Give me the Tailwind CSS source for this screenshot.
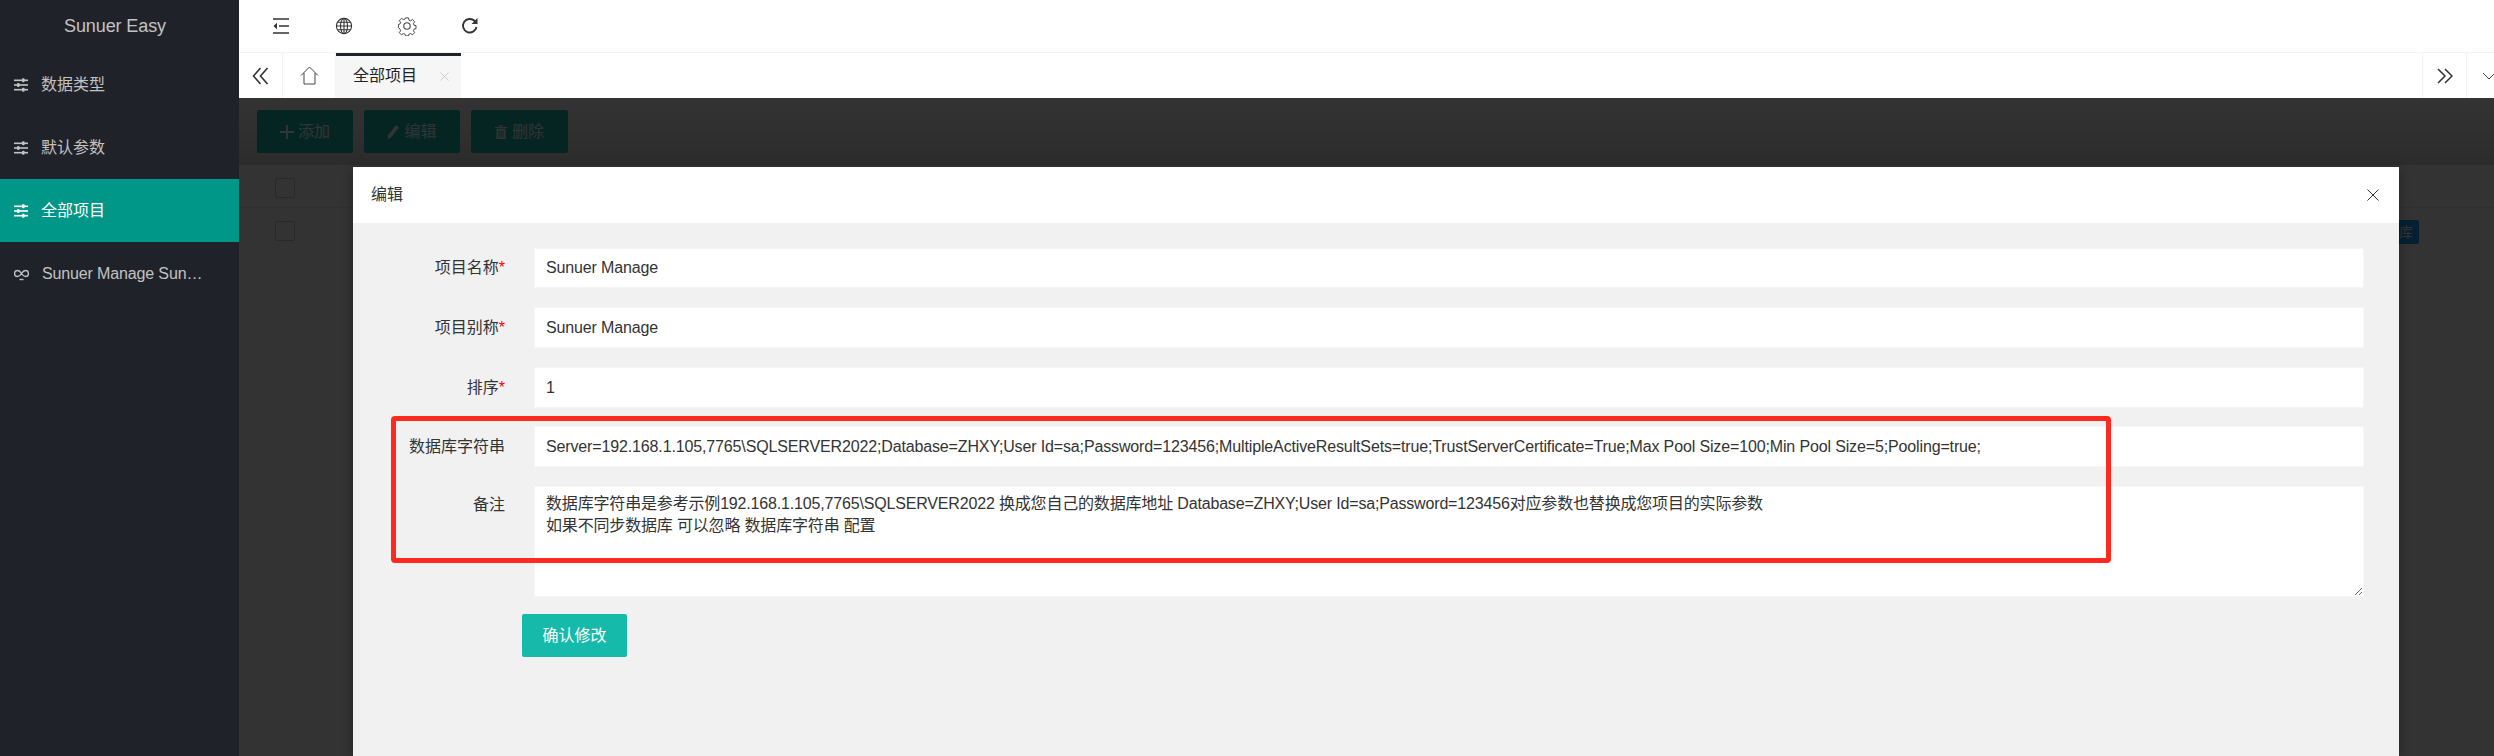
<!doctype html>
<html lang="zh-CN">
<head>
<meta charset="utf-8">
<title>Sunuer Easy</title>
<script src="https://cdn.jsdelivr.net/npm/@tailwindcss/browser@4"></script>
</head>
<body class="m-0 h-[756px] w-[2494px] overflow-hidden bg-white font-['Liberation_Sans','Noto_Sans_CJK_SC',sans-serif] text-[16px] text-[#333]">
<div class="flex h-[756px] w-[2494px]">
  <aside class="w-[239px] shrink-0 bg-[#20222a] text-[#c2c2c3]">
    <div class="flex h-[53px] items-center justify-center pr-[9px] text-[18px] tracking-[-0.1px]">Sunuer Easy</div>
    <nav class="flex flex-col">
      <a class="flex h-[63px] items-center gap-[13px] pl-[14px]"><svg class="h-[14px] w-[14px]" viewBox="0 0 14 14" fill="currentColor"><rect y="1.5" width="14" height="1.6"/><rect y="6.2" width="14" height="1.6"/><rect y="10.9" width="14" height="1.6"/><rect x="8" y="0.3" width="2.6" height="4" rx="1"/><rect x="3" y="5" width="2.6" height="4" rx="1"/><rect x="8" y="9.7" width="2.6" height="4" rx="1"/></svg><span>数据类型</span></a>
      <a class="flex h-[63px] items-center gap-[13px] pl-[14px]"><svg class="h-[14px] w-[14px]" viewBox="0 0 14 14" fill="currentColor"><rect y="1.5" width="14" height="1.6"/><rect y="6.2" width="14" height="1.6"/><rect y="10.9" width="14" height="1.6"/><rect x="8" y="0.3" width="2.6" height="4" rx="1"/><rect x="3" y="5" width="2.6" height="4" rx="1"/><rect x="8" y="9.7" width="2.6" height="4" rx="1"/></svg><span>默认参数</span></a>
      <a class="flex h-[63px] items-center gap-[13px] bg-[#009688] pl-[14px] text-white"><svg class="h-[14px] w-[14px]" viewBox="0 0 14 14" fill="currentColor"><rect y="1.5" width="14" height="1.6"/><rect y="6.2" width="14" height="1.6"/><rect y="10.9" width="14" height="1.6"/><rect x="8" y="0.3" width="2.6" height="4" rx="1"/><rect x="3" y="5" width="2.6" height="4" rx="1"/><rect x="8" y="9.7" width="2.6" height="4" rx="1"/></svg><span>全部项目</span></a>
      <a class="flex h-[63px] items-center gap-[13px] pl-[14px]"><svg class="h-[14px] w-[15px]" viewBox="0 0 15 14" fill="none" stroke="currentColor" stroke-width="1.4"><path d="M7.5 6.5C6 4 4.8 3.5 3.5 3.5a3 3 0 0 0 0 6C4.8 9.500 6 9 7.500 6.500C9 4 10.200 3.500 11.500 3.500a3 3 0 0 1 0 6C10.200 9.500 9 9 7.500 6.500Z"/><path d="M5.500 12.500h4"/></svg><span class="tracking-[-0.14px]">Sunuer Manage Sun…</span></a>
    </nav>
  </aside>
  <main class="relative flex min-w-0 flex-1 flex-col">
    <header class="flex h-[53px] shrink-0 items-center border-b border-[#f3f3f3] pl-[10px] text-[#333]">
      <button class="flex w-[63px] justify-center"><svg class="h-[18px] w-[18px]" viewBox="0 0 18 18" fill="none" stroke="currentColor" stroke-width="1.6"><path d="M1 2h16M7 9h10M1 16h16"/><path d="M5 5.800 1.500 9 5 12.200Z" fill="currentColor" stroke="none"/></svg></button>
      <button class="flex w-[63px] justify-center"><svg class="h-[18px] w-[18px]" viewBox="0 0 18 18" fill="none" stroke="currentColor" stroke-width="1.100"><circle cx="9" cy="9" r="7.600"/><ellipse cx="9" cy="9" rx="3.500" ry="7.600"/><path d="M9 1.400v15.200M1.400 9h15.200M2.500 5.300h13M2.500 12.700h13"/></svg></button>
      <button class="flex w-[63px] justify-center"><svg class="h-[20px] w-[20px]" viewBox="0 0 20 20" fill="none" stroke="#444" stroke-width="1.100"><circle cx="10" cy="10" r="3.200"/><path d="M8.300 1h3.400l.5 2.500 1.700.7 2.200-1.400 2.400 2.400-1.400 2.200.7 1.700 2.200.5v3.400l-2.200.5-.7 1.700 1.400 2.200-2.400 2.400-2.200-1.400-1.700.7-.5 1.900H8.300l-.5-1.900-1.700-.7-2.200 1.400-2.400-2.400 1.400-2.200-.7-1.700L.5 11.700V8.300l1.700-.5.700-1.700-1.400-2.200 2.400-2.400 2.200 1.400 1.700-.7Z" transform="translate(1 1) scale(.9)"/></svg></button>
      <button class="flex w-[63px] justify-center"><svg class="h-[18px] w-[18px]" viewBox="0 0 18 18" fill="none" stroke="currentColor" stroke-width="1.900"><path d="M15.500 10a6.800 6.800 0 1 1-2-6.200l1.700 1.700"/><path d="M16.500 1v6h-6Z" fill="currentColor" stroke="none"/></svg></button>
    </header>
    <div class="flex h-[45px] shrink-0 items-stretch">
      <button class="flex w-[44px] items-center justify-center border-r border-[#f3f3f3]"><svg class="h-[18px] w-[17px]" viewBox="0 0 17 18" fill="none" stroke="#333" stroke-width="1.600"><path d="M8.500 1 1.500 9l7 8M15.500 1l-7 8 7 8"/></svg></button>
      <button class="flex w-[52px] items-center justify-center"><svg class="h-[19px] w-[19px]" viewBox="0 0 19 19" fill="none" stroke="#444" stroke-width="1"><path d="M1 9.500 9.500 1 18 9.500M4 7v11h11V7"/></svg></button>
      <div class="relative flex w-[126px] items-center bg-[#f6f6f6] pl-[18px] text-[#222]"><span class="absolute left-[1px] right-0 top-0 h-[3px] bg-[#20222a]"></span><span>全部项目</span><svg class="ml-[23px] mt-[1px] h-[9px] w-[9px]" viewBox="0 0 9 9" stroke="#ccc" stroke-width="1"><path d="M.5.500l8 8M8.500.500l-8 8"/></svg></div>
      <div class="flex-1"></div>
      <button class="flex w-[45px] items-center justify-center border-x border-[#f3f3f3]"><svg class="h-[16px] w-[16px]" viewBox="0 0 16 16" fill="none" stroke="#333" stroke-width="1.500"><path d="M1 1l7 7-7 7M8 1l7 7-7 7"/></svg></button>
      <button class="flex w-[27px] items-center justify-start pl-[15px]"><svg class="h-[8px] w-[14px] shrink-0" viewBox="0 0 14 8" fill="none" stroke="#444" stroke-width="1"><path d="M1 1l6 6 6-6"/></svg></button>
    </div>
    <section class="flex-1 bg-white">
      <div class="flex h-[67px] gap-[11px] bg-gradient-to-b from-white to-[#d9d9d9] pl-[18px] pt-[12px] text-white">
        <button class="flex h-[43px] w-[96px] items-center justify-center gap-[4px] rounded-[2px] bg-[#16baaa]"><svg class="h-[14px] w-[14px]" viewBox="0 0 14 14" fill="currentColor"><path d="M6 0h2v6h6v2H8v6H6V8H0V6h6Z"/></svg>添加</button>
        <button class="flex h-[43px] w-[96px] items-center justify-center gap-[5px] rounded-[2px] bg-[#16baaa]"><svg class="h-[14px] w-[12px]" viewBox="0 0 12 14" fill="currentColor"><path d="M9 0l3 2.500-8 10-3.500 1.500.5-3.500Z"/></svg>编辑</button>
        <button class="flex h-[43px] w-[97px] items-center justify-center gap-[5px] rounded-[2px] bg-[#16baaa]"><svg class="h-[14px] w-[12px]" viewBox="0 0 12 14" fill="currentColor"><path d="M0 2h12v1.200H0ZM4 .300h4v1.200H4ZM1.500 4h9v10h-9Zm2 1.500v7h1v-7Zm2 0v7h1v-7Zm2 0v7h1v-7Z" fill-rule="evenodd"/></svg>删除</button>
      </div>
      <div class="h-[43px] border-b border-[#eee] pl-[36px] pt-[13px]"><div class="h-[20px] w-[20px] rounded-[2px] border border-[#ccc]"></div></div>
      <div class="relative h-[43px] pl-[36px] pt-[13px]"><div class="h-[20px] w-[20px] rounded-[2px] border border-[#ccc]"></div><span class="absolute left-[2130px] top-[12px] flex h-[24px] w-[50px] items-center justify-end rounded-[2px] bg-[#1e9fff] pr-[6px] text-[14px] text-white">数据库</span></div>
    </section>
    <div class="absolute inset-x-0 bottom-0 top-[98px] bg-black/80"></div>
    <div class="absolute bottom-0 left-[114px] top-[167px] flex w-[2046px] flex-col bg-[#f1f1f1] shadow-[0_2px_10px_rgba(0,0,0,0.3)]">
      <div class="flex h-[56px] shrink-0 items-center justify-between bg-white pl-[18px] pr-[20px] text-[#333]">
        <span>编辑</span>
        <svg class="h-[12px] w-[12px]" viewBox="0 0 12 12" stroke="#333" stroke-width="1"><path d="M.5.500l11 11M11.500.500l-11 11"/></svg>
      </div>
      <form class="flex flex-col pl-[25px] pr-[35px] pt-[25px]">
        <div class="flex h-[40px] items-center"><label class="w-[127px] shrink-0 text-right">项目名称<span class="text-[#ff0000]">*</span></label><input class="ml-[29px] h-full min-w-0 flex-1 border border-[#f6f6f6] bg-white pl-[11px] tracking-[-0.14px] text-[#333] outline-none" value="Sunuer Manage"></div>
        <div class="mt-[19px] flex h-[41px] items-center"><label class="w-[127px] shrink-0 text-right">项目别称<span class="text-[#ff0000]">*</span></label><input class="ml-[29px] h-full min-w-0 flex-1 border border-[#f6f6f6] bg-white pl-[11px] tracking-[-0.14px] text-[#333] outline-none" value="Sunuer Manage"></div>
        <div class="mt-[19px] flex h-[41px] items-center"><label class="w-[127px] shrink-0 text-right">排序<span class="text-[#ff0000]">*</span></label><input class="ml-[29px] h-full min-w-0 flex-1 border border-[#f6f6f6] bg-white pl-[11px] tracking-[-0.14px] text-[#333] outline-none" value="1"></div>
        <div class="mt-[18px] flex h-[41px] items-center"><label class="w-[127px] shrink-0 text-right">数据库字符串</label><input class="ml-[29px] h-full min-w-0 flex-1 border border-[#f6f6f6] bg-white pl-[11px] tracking-[-0.14px] text-[#333] outline-none" value="Server=192.168.1.105,7765\SQLSERVER2022;Database=ZHXY;User Id=sa;Password=123456;MultipleActiveResultSets=true;TrustServerCertificate=True;Max Pool Size=100;Min Pool Size=5;Pooling=true;"></div>
        <div class="mt-[19px] flex h-[111px] items-start"><label class="w-[127px] shrink-0 pt-[7px] text-right">备注</label><textarea class="ml-[29px] h-full min-w-0 flex-1 border border-[#f6f6f6] bg-white pl-[11px] pt-[6px] leading-[22px] tracking-[-0.17px] text-[#333] outline-none">数据库字符串是参考示例192.168.1.105,7765\SQLSERVER2022 换成您自己的数据库地址 Database=ZHXY;User Id=sa;Password=123456对应参数也替换成您项目的实际参数
如果不同步数据库 可以忽略 数据库字符串 配置</textarea></div>
        <button type="button" class="ml-[144px] mt-[17px] h-[43px] w-[105px] rounded-[2px] bg-[#16baaa] text-white">确认修改</button>
      </form>
    </div>
    <div class="pointer-events-none absolute left-[152px] top-[416px] h-[147px] w-[1720px] rounded-[4px] border-[5px] border-[#ff2a1f]"></div>
  </main>
</div>
</body>
</html>
